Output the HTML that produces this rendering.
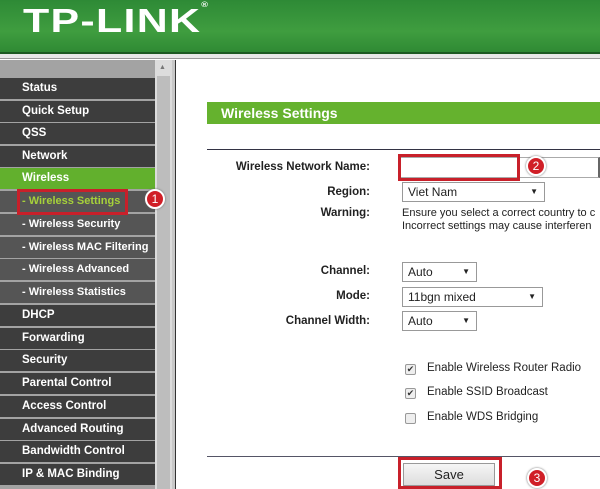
<!DOCTYPE html>
<html><head><style>
*{margin:0;padding:0;box-sizing:border-box}
body{width:600px;height:489px;overflow:hidden;background:#fff;font-family:"Liberation Sans",Arial,sans-serif;position:relative}
.hdr{position:absolute;left:0;top:0;width:600px;height:52px;background:linear-gradient(#2e8a36,#3f9d3f 60%,#2f8a34)}
.logo{position:absolute;left:23px;top:2px;color:#fff;font-weight:bold;font-size:33px;letter-spacing:1px;transform:scaleX(1.3);transform-origin:left;}
.hl{position:absolute;left:0;top:52px;width:600px;height:2px;background:#1d5a22}
.hb{position:absolute;left:0;top:54px;width:600px;height:5px;background:#e8e8e8;border-bottom:1px solid #999}
.side{position:absolute;left:0;top:60px;width:155px;height:429px;background:#a3a3a3}
.row{position:absolute;left:0;width:155px;height:21px;background:#3d3d3d;color:#fff;font-weight:bold;font-size:11.5px;line-height:21px;padding-left:22px;white-space:nowrap;overflow:hidden}
.sub{background:#555;padding-left:22px;font-size:11px;letter-spacing:0}
.grn{background:#62b02d}
.sb{position:absolute;left:155px;top:60px;width:17px;height:429px;background:#dcdcdc}
.th{position:absolute;left:157px;top:76px;width:13px;height:413px;background:#bdbdbd}
.vl{position:absolute;left:172px;top:60px;width:4px;height:429px;background:#c8c8c8;border-right:1px solid #333}
.title{position:absolute;left:207px;top:102px;width:393px;height:22px;background:#65b22e;color:#fff;font-weight:bold;font-size:14px;line-height:22px;padding-left:14px}
.line{position:absolute;left:207px;width:393px;height:1px;background:#334}
.lab{position:absolute;right:230px;font-size:11.5px;font-weight:bold;color:#222}
.sel{position:absolute;left:402px;height:20px;border:1px solid #999;background:#fff;font-size:12px;line-height:18px;padding-left:5px;color:#222}
.sel:after{content:"▼";position:absolute;right:6px;font-size:8px}
.txt{position:absolute;left:402px;font-size:11px;color:#222;line-height:13px;white-space:nowrap}
.cb{position:absolute;left:405px;width:11px;height:11px;border:1px solid #999;background:#eee;border-radius:2px;font-size:9px;line-height:9px;text-align:center;color:#333}
.ct{position:absolute;left:427px;font-size:11.5px;color:#222}
.red{position:absolute;border:3px solid #c8202a}
.num{position:absolute;width:20px;height:20px;border-radius:50%;background:#d01f27;border:2px solid #fff;box-shadow:0 0 2px #666;color:#fff;font-size:12px;text-align:center;line-height:16px}
</style></head><body>
<div class="hdr"><div class="logo">TP-LINK<span style="font-size:7px;vertical-align:top">®</span></div></div>
<div class="hl"></div><div class="hb"></div>
<div class="side"></div>
<div class="row" style="top:78px">Status</div>
<div class="row" style="top:101px">Quick Setup</div>
<div class="row" style="top:123px">QSS</div>
<div class="row" style="top:146px">Network</div>
<div class="row grn" style="top:168px">Wireless</div>
<div class="row sub" style="top:191px;color:#a6d13a">- Wireless Settings</div>
<div class="row sub" style="top:214px">- Wireless Security</div>
<div class="row sub" style="top:237px">- Wireless MAC Filtering</div>
<div class="row sub" style="top:259px">- Wireless Advanced</div>
<div class="row sub" style="top:282px">- Wireless Statistics</div>
<div class="row" style="top:305px">DHCP</div>
<div class="row" style="top:328px">Forwarding</div>
<div class="row" style="top:350px">Security</div>
<div class="row" style="top:373px">Parental Control</div>
<div class="row" style="top:396px">Access Control</div>
<div class="row" style="top:419px">Advanced Routing</div>
<div class="row" style="top:441px">Bandwidth Control</div>
<div class="row" style="top:464px">IP &amp; MAC Binding</div>
<div class="sb"></div><div class="th"></div>
<div style="position:absolute;left:159px;top:64px;font-size:7px;color:#777">▲</div>
<div class="vl"></div>
<div class="red" style="left:17px;top:189px;width:111px;height:26px"></div>
<div class="num" style="left:145px;top:189px">1</div>
<div class="title">Wireless Settings</div>
<div class="line" style="top:149px"></div>
<div class="lab" style="top:161px">Wireless Network Name:</div>
<div style="position:absolute;left:400px;top:157px;width:200px;height:21px;border:1px solid #aaa;border-right:2px solid #666;background:#fff"></div>
<div class="red" style="left:398px;top:154px;width:122px;height:27px"></div>
<div class="num" style="left:526px;top:156px">2</div>
<div class="lab" style="top:186px">Region:</div>
<div class="sel" style="top:182px;width:143px">Viet Nam</div>
<div class="lab" style="top:207px">Warning:</div>
<div class="txt" style="top:207px">Ensure you select a correct country to c<br>Incorrect settings may cause interferen</div>
<div class="lab" style="top:265px">Channel:</div>
<div class="sel" style="top:262px;width:75px">Auto</div>
<div class="lab" style="top:290px">Mode:</div>
<div class="sel" style="top:287px;width:141px">11bgn mixed</div>
<div class="lab" style="top:315px">Channel Width:</div>
<div class="sel" style="top:311px;width:75px">Auto</div>
<div class="cb" style="top:364px">✔</div><div class="ct" style="top:362px">Enable Wireless Router Radio</div>
<div class="cb" style="top:388px">✔</div><div class="ct" style="top:386px">Enable SSID Broadcast</div>
<div class="cb" style="top:413px"></div><div class="ct" style="top:411px">Enable WDS Bridging</div>
<div class="line" style="top:456px;background:#556"></div>
<div style="position:absolute;left:403px;top:463px;width:92px;height:23px;border:1px solid #999;background:linear-gradient(#f6f6f6,#ddd);font-size:13px;text-align:center;line-height:21px;color:#222">Save</div>
<div class="red" style="left:398px;top:457px;width:104px;height:32px"></div>
<div class="num" style="left:527px;top:468px">3</div>
</body></html>
